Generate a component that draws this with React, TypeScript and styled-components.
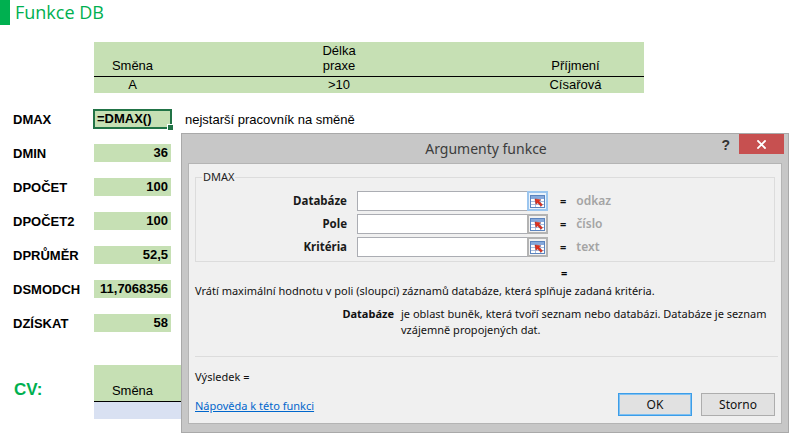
import React from 'react'
import styled, { createGlobalStyle } from 'styled-components'

const GlobalStyle = createGlobalStyle`
  html, body {
    margin: 0;
    padding: 0;
    background: #fff;
  }
  body {
    width: 795px;
    height: 434px;
    overflow: hidden;
    font-family: "Liberation Sans", Arial, sans-serif;
    font-size: 13px;
    color: #000;
  }
`

const Sheet = styled.div`
  position: relative;
  width: 795px;
  height: 434px;
`

const TitleRow = styled.div`
  display: flex;
  align-items: center;
  height: 25px;
  gap: 5px;
`

const TitleMark = styled.div`
  width: 10px;
  height: 25px;
  background: #00b050;
`

const SheetTitle = styled.div`
  font-family: "Open Sans", sans-serif;
  font-size: 18px;
  color: #00b050;
  line-height: 25px;
`

const DataTable = styled.div<{ $top: number }>`
  margin-top: ${p => p.$top}px;
  margin-left: 94px;
  width: 550px;
  display: grid;
  grid-template-columns: 77px 336px 137px;
`

const HeadCell = styled.div<{ $h: number }>`
  height: ${p => p.$h}px;
  background: #c6e0b4;
  border-bottom: 1px solid #000;
  display: flex;
  flex-direction: column;
  justify-content: flex-end;
  align-items: center;
  line-height: 15px;
  padding-bottom: 3px;
  box-sizing: border-box;
`

const BodyCell = styled.div<{ $bg: string; $h: number }>`
  height: ${p => p.$h}px;
  background: ${p => p.$bg};
  text-align: center;
  line-height: ${p => p.$h}px;
`

const FuncList = styled.div`
  margin-top: 17px;
  display: flex;
  flex-direction: column;
  gap: 16px;
`

const FuncRow = styled.div`
  display: flex;
  align-items: center;
  height: 18px;
`

const FuncLabel = styled.div`
  width: 94px;
  padding-left: 13px;
  box-sizing: border-box;
  font-weight: bold;
`

const ValueCell = styled.div<{ $selected?: boolean }>`
  position: relative;
  width: 77px;
  height: 18px;
  line-height: 18px;
  background: #c6e0b4;
  font-weight: bold;
  box-sizing: border-box;
  text-align: ${p => (p.$selected ? 'left' : 'right')};
  padding: 0 3px;
  box-shadow: ${p =>
    p.$selected ? '0 0 0 1px #217346, inset 0 0 0 1px #217346' : 'none'};
`

const FillHandle = styled.span`
  position: absolute;
  right: -3px;
  bottom: -3px;
  width: 5px;
  height: 5px;
  background: #217346;
  border: 1px solid #fff;
  box-sizing: content-box;
`

const Note = styled.div`
  margin-left: 14px;
`

const CvSection = styled.div`
  margin-top: 33px;
  display: flex;
  align-items: center;
`

const CvLabel = styled.div`
  width: 94px;
  padding-left: 14px;
  box-sizing: border-box;
  font-size: 17px;
  font-weight: bold;
  color: #00b050;
  margin-top: -4px;
`

const CvTable = styled(DataTable)`
  margin: 0;
`

/* dialog */

const Dialog = styled.div`
  position: absolute;
  left: 181px;
  top: 133px;
  width: 608px;
  height: 300px;
  box-sizing: border-box;
  background: #c7c7c7;
  border: 1px solid #a9a9a9;
  padding: 0 6px 8px 6px;
  display: flex;
  flex-direction: column;
  font-family: "Noto Sans", sans-serif;
  font-size: 11px;
  color: #000;
`

const TitleBar = styled.div`
  height: 29px;
  display: grid;
  grid-template-columns: 1fr auto 1fr;
  margin-right: -2px;
`

const DialogTitle = styled.div`
  grid-column: 2;
  font-size: 14px;
  color: #3c3c3c;
  line-height: 30px;
`

const WindowControls = styled.div`
  grid-column: 3;
  justify-self: end;
  display: flex;
  align-items: flex-start;
  gap: 9px;
`

const HelpButton = styled.div`
  font-family: "Liberation Sans", sans-serif;
  font-weight: bold;
  font-size: 14px;
  color: #333;
  line-height: 18px;
  padding-top: 2px;
`

const CloseButton = styled.div`
  width: 45px;
  height: 20px;
  background: #c75050;
  display: flex;
  align-items: center;
  justify-content: center;
`

const Panel = styled.div`
  flex: 1;
  background: #f0f0f0;
  border: 1px solid #b4b4b4;
  padding: 13px 6px 0 6px;
  display: flex;
  flex-direction: column;
  line-height: 16px;
`

const Group = styled.div`
  border: 1px solid #dcdcdc;
  padding-bottom: 4px;
  display: flex;
  flex-direction: column;
`

const GroupCaption = styled.div`
  align-self: flex-start;
  margin: -8px 0 0 6px;
  padding: 0 1px;
  background: #f0f0f0;
  line-height: 14px;
  color: #222;
`

const ArgRows = styled.div`
  margin-top: 7px;
  display: flex;
  flex-direction: column;
  gap: 3px;
`

const ArgRow = styled.div`
  display: grid;
  grid-template-columns: 161px 170px 21px max-content max-content;
  justify-content: start;
  align-items: center;
  height: 20px;
`

const ArgLabel = styled.div`
  text-align: right;
  font-weight: bold;
  color: #1a1a1a;
  margin-right: 10px;
  grid-column: 1;
  font-size: 11.5px;
`

const ArgInput = styled.div`
  grid-column: 2;
  height: 20px;
  box-sizing: border-box;
  background: #fff;
  border: 1px solid #abadb3;
  border-right: none;
`

const RefButton = styled.div<{ $focused?: boolean }>`
  grid-column: 3;
  height: 20px;
  box-sizing: border-box;
  border: 2px solid ${p => (p.$focused ? '#9cc6ef' : '#b3b3b3')};
  background: ${p => (p.$focused ? '#eaf3fc' : '#f2f2f2')};
  display: flex;
  align-items: center;
  justify-content: center;
`

const Eq = styled.div`
  margin-left: 12px;
  font-weight: bold;
  color: #111;
`

const ArgValue = styled.div`
  margin-left: 10px;
  font-weight: 600;
  color: #a4a4a4;
  font-size: 12px;
`

const ResultEq = styled.div`
  margin-top: 3px;
  padding-left: 366px;
  font-weight: bold;
`

const Description = styled.div`
  margin-top: 2px;
  color: #111;
  white-space: nowrap;
`

const ParamHelp = styled.div`
  margin-top: 7px;
  display: grid;
  grid-template-columns: 199px 1fr;
  column-gap: 7px;
  color: #111;
`

const ParamName = styled.div`
  text-align: right;
  font-weight: bold;
`

const ParamLine = styled.div`
  white-space: nowrap;
`

const Separator = styled.div`
  margin-top: 18px;
  height: 1px;
  background: #dcdcdc;
  margin-right: -3px;
`

const ResultRow = styled.div`
  margin-top: 12px;
  color: #111;
`

const Footer = styled.div`
  margin-top: 8px;
  display: flex;
  align-items: center;
  gap: 9px;
`

const HelpLink = styled.a`
  color: #0066cc;
  text-decoration: underline;
  margin-right: auto;
  margin-top: 3px;
`

const DialogButton = styled.div<{ $default?: boolean }>`
  width: 74px;
  height: 23px;
  box-sizing: border-box;
  background: #e1e1e1;
  border: 1px solid ${p => (p.$default ? '#3c9de8' : '#adadad')};
  box-shadow: ${p => (p.$default ? 'inset 0 0 0 1px #7ec0f2' : 'none')};
  display: flex;
  align-items: center;
  justify-content: center;
  color: #111;
  font-size: 12px;
`

const RefIcon = () => (
  <svg width="15" height="13" viewBox="0 0 15 13">
    <rect x="0.5" y="0.5" width="14" height="12" fill="#fff" stroke="#5b84bf" />
    <rect x="1" y="1" width="13" height="3" fill="#86a9dc" />
    <path d="M1 6.5H14M1 9.5H14M5.5 4V12M10.5 4V12" stroke="#a9bfdf" strokeWidth="1" />
    <path d="M5 4L10.5 4.8L9 6.3L12.5 9.8L11 11.3L7.5 7.8L6 9.3Z" fill="#e0301e" stroke="#a51a0c" strokeWidth="0.5" />
  </svg>
)

const CloseIcon = () => (
  <svg width="9" height="9" viewBox="0 0 9 9">
    <path d="M1 1L8 8M8 1L1 8" stroke="#fff" strokeWidth="1.8" strokeLinecap="square" />
  </svg>
)

const functions = [
  { label: 'DMAX', value: '=DMAX()', selected: true },
  { label: 'DMIN', value: '36' },
  { label: 'DPOČET', value: '100' },
  { label: 'DPOČET2', value: '100' },
  { label: 'DPRŮMĚR', value: '52,5' },
  { label: 'DSMODCH', value: '11,7068356' },
  { label: 'DZÍSKAT', value: '58' },
]

const args = [
  { label: 'Databáze', value: 'odkaz', focused: true },
  { label: 'Pole', value: 'číslo' },
  { label: 'Kritéria', value: 'text' },
]

export default function App() {
  return (
    <Sheet>
      <GlobalStyle />
      <TitleRow>
        <TitleMark />
        <SheetTitle>Funkce DB</SheetTitle>
      </TitleRow>

      <DataTable $top={17}>
        <HeadCell $h={35}>Směna</HeadCell>
        <HeadCell $h={35}>
          <span>Délka</span>
          <span>praxe</span>
        </HeadCell>
        <HeadCell $h={35}>Příjmení</HeadCell>
        <BodyCell $bg="#c6e0b4" $h={16}>A</BodyCell>
        <BodyCell $bg="#c6e0b4" $h={16}>&gt;10</BodyCell>
        <BodyCell $bg="#c6e0b4" $h={16}>Císařová</BodyCell>
      </DataTable>

      <FuncList>
        {functions.map(f => (
          <FuncRow key={f.label}>
            <FuncLabel>{f.label}</FuncLabel>
            <ValueCell $selected={f.selected}>
              {f.value}
              {f.selected && <FillHandle />}
            </ValueCell>
            {f.selected && <Note>nejstarší pracovník na směně</Note>}
          </FuncRow>
        ))}
      </FuncList>

      <CvSection>
        <CvLabel>CV:</CvLabel>
        <CvTable $top={0}>
          <HeadCell $h={37}>Směna</HeadCell>
          <HeadCell $h={37} />
          <HeadCell $h={37} />
          <BodyCell $bg="#d9e1f2" $h={17} />
          <BodyCell $bg="#d9e1f2" $h={17} />
          <BodyCell $bg="#d9e1f2" $h={17} />
        </CvTable>
      </CvSection>

      <Dialog>
        <TitleBar>
          <DialogTitle>Argumenty funkce</DialogTitle>
          <WindowControls>
            <HelpButton>?</HelpButton>
            <CloseButton>
              <CloseIcon />
            </CloseButton>
          </WindowControls>
        </TitleBar>
        <Panel>
          <Group>
            <GroupCaption>DMAX</GroupCaption>
            <ArgRows>
              {args.map(a => (
                <ArgRow key={a.label}>
                  <ArgLabel>{a.label}</ArgLabel>
                  <ArgInput />
                  <RefButton $focused={a.focused}>
                    <RefIcon />
                  </RefButton>
                  <Eq>=</Eq>
                  <ArgValue>{a.value}</ArgValue>
                </ArgRow>
              ))}
            </ArgRows>
          </Group>
          <ResultEq>=</ResultEq>
          <Description>
            Vrátí maximální hodnotu v poli (sloupci) záznamů databáze, která splňuje zadaná kritéria.
          </Description>
          <ParamHelp>
            <ParamName>Databáze</ParamName>
            <div>
              <ParamLine>je oblast buněk, která tvoří seznam nebo databázi. Databáze je seznam</ParamLine>
              <ParamLine>vzájemně propojených dat.</ParamLine>
            </div>
          </ParamHelp>
          <Separator />
          <ResultRow>Výsledek =</ResultRow>
          <Footer>
            <HelpLink href="#">Nápověda k této funkci</HelpLink>
            <DialogButton $default>OK</DialogButton>
            <DialogButton>Storno</DialogButton>
          </Footer>
        </Panel>
      </Dialog>
    </Sheet>
  )
}
